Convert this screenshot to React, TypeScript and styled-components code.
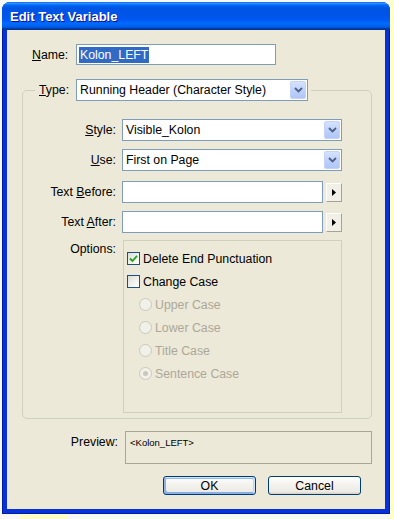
import React from 'react';
import styled, { createGlobalStyle } from 'styled-components';

const Global = createGlobalStyle`
  html, body { margin: 0; padding: 0; }
  body {
    width: 394px;
    height: 519px;
    overflow: hidden;
    background:
      linear-gradient(#ffffc6, #ffffc6) 20px 514px / 47px 5px no-repeat,
      linear-gradient(#333, #333) 37px 514px / 1px 5px no-repeat,
      linear-gradient(to right, #f7f7f5 0, #f7f7f5 390px, #ffffc6 390px);
    font-family: "Liberation Sans", Arial, sans-serif;
    font-size: 12.3px;
    color: #000;
  }
`;

const Window = styled.div`
  margin: 2px 0 0 2px;
  width: 388px;
  height: 512px;
  display: flex;
  flex-direction: column;
  border-radius: 8px 8px 0 0;
  overflow: hidden;
  background: #0831d9;
`;

const TitleBar = styled.div`
  height: 28px;
  flex: none;
  display: flex;
  align-items: center;
  padding-left: 8px;
  color: #fff;
  font-weight: bold;
  font-size: 13px;
  text-shadow: 1px 1px #0f1089;
  background: linear-gradient(
    180deg,
    #0058ee 0%,
    #3593ff 4%,
    #288eff 6%,
    #127dff 8%,
    #036ffc 10%,
    #0262ee 14%,
    #0057e5 20%,
    #0054e3 24%,
    #0055eb 56%,
    #005bf5 66%,
    #026afe 76%,
    #0062ef 86%,
    #0052d6 92%,
    #0040ab 94%,
    #003092 100%
  );
`;

const Frame = styled.div`
  flex: 1;
  display: flex;
  padding: 0 5px 5px;
  background: #0831d9;
  box-shadow: inset 1px 0 #001ea0, inset -1px 0 #001ea0, inset 0 -1px #001ea0;
`;

const Client = styled.div`
  flex: 1;
  display: flex;
  flex-direction: column;
  background: #ece9d8;
`;

const NameRow = styled.div`
  display: flex;
  align-items: center;
  margin-top: 14px;
  padding-left: 25px;
`;

const NameLabel = styled.span`
  width: 44px;
`;

const TextBox = styled.div<{ $w: number }>`
  box-sizing: border-box;
  width: ${p => p.$w}px;
  height: ${p => (p.$w === 200 ? 21 : 22)}px;
  border: 1px solid #7f9db9;
  background: #fff;
  display: flex;
  align-items: center;
  padding-left: 2px;
`;

const Selected = styled.span`
  background: #316ac5;
  color: #fff;
  padding: 1px 1px;
`;

const Group = styled.fieldset`
  margin: 14px 13px 0 15px;
  padding: 18px 0 5px 0;
  border: 1px solid #d0d0bf;
  border-radius: 5px;
  min-width: 0;
`;

const Legend = styled.legend`
  margin-left: 12px;
  padding: 0 3px 0 4px;
  display: flex;
  align-items: center;
  gap: 7px;
`;

const Combo = styled.div<{ $w: number }>`
  box-sizing: border-box;
  width: ${p => p.$w}px;
  height: 22px;
  border: 1px solid #7f9db9;
  background: #fff;
  display: flex;
  align-items: center;
`;

const ComboText = styled.span`
  flex: 1;
  padding-left: 3px;
  white-space: nowrap;
  overflow: hidden;
`;

const ComboButton = styled.span`
  box-sizing: border-box;
  width: 16px;
  height: 18px;
  margin-right: 1px;
  border: 1px solid #c3d3fd;
  border-radius: 2px;
  background: linear-gradient(180deg, #d6e2fd 0%, #bccffa 60%, #b1c6f7 100%);
  display: flex;
  align-items: center;
  justify-content: center;
`;

const FieldRow = styled.div<{ $mt: number }>`
  display: flex;
  align-items: center;
  margin-top: ${p => p.$mt}px;
  height: 22px;
`;

const RowLabel = styled.span`
  width: 93px;
  text-align: right;
  margin-right: 6px;
  white-space: nowrap;
`;

const ArrowButton = styled.span`
  box-sizing: border-box;
  width: 16px;
  height: 19px;
  margin-left: 3px;
  background: #f1efe6;
  border: 1px solid;
  border-color: #fff #a7a394 #a7a394 #fff;
  display: flex;
  align-items: center;
  justify-content: center;
`;

const OptionsRow = styled.div`
  display: flex;
  align-items: flex-start;
  margin-top: 7px;
`;

const OptionsLabel = styled(RowLabel)`
  margin-top: 2px;
  margin-right: 7px;
`;

const OptionsBox = styled.div`
  box-sizing: border-box;
  width: 219px;
  height: 173px;
  border: 1px solid #d0d0bf;
  padding: 6px 0 0 3px;
  display: flex;
  flex-direction: column;
`;

const OptionItem = styled.div<{ $indent?: boolean; $disabled?: boolean }>`
  height: 23px;
  display: flex;
  align-items: center;
  gap: 3px;
  padding-left: ${p => (p.$indent ? 12 : 0)}px;
  color: ${p => (p.$disabled ? '#aca899' : '#000')};
  white-space: nowrap;
`;

const Check = styled.span`
  box-sizing: border-box;
  width: 13px;
  height: 13px;
  border: 1px solid #1c5180;
  background: linear-gradient(135deg, #dcdcd7 0%, #f2f2ef 60%, #fff 100%);
  display: flex;
  align-items: center;
  justify-content: center;
`;

const Radio = styled.span`
  box-sizing: border-box;
  width: 13px;
  height: 13px;
  border-radius: 50%;
  border: 1px solid #cac8bb;
  background: #f2f1e9;
  display: flex;
  align-items: center;
  justify-content: center;
`;

const RadioDot = styled.span`
  width: 5px;
  height: 5px;
  border-radius: 50%;
  background: #cac8bb;
`;

const PreviewRow = styled.div`
  display: flex;
  align-items: flex-start;
  margin-top: 12px;
`;

const PreviewLabel = styled.span`
  width: 111px;
  text-align: right;
  margin-right: 7px;
  margin-top: 4px;
`;

const PreviewBox = styled.div`
  box-sizing: border-box;
  width: 247px;
  height: 33px;
  border: 1px solid #a9a696;
  padding: 5px 4px;
  font-size: 9.5px;
`;

const ButtonRow = styled.div`
  display: flex;
  justify-content: flex-end;
  gap: 12px;
  margin-top: 12px;
  padding-right: 24px;
`;

const Button = styled.button<{ $default?: boolean }>`
  box-sizing: border-box;
  width: 93px;
  height: 19px;
  padding: 0;
  font-family: inherit;
  font-size: 12.3px;
  color: #000;
  border: 1px solid #003c74;
  border-radius: 3px;
  background: linear-gradient(180deg, #ffffff 0%, #f4f3ee 40%, #ecebe6 85%, #d6d0c5 100%);
  box-shadow: ${p =>
    p.$default
      ? 'inset -1px 1px #cee7ff, inset 1px 2px #98b8ea, inset -2px 2px #bcd4f6, inset 1px -1px #89ade4, inset 2px -2px #89ade4'
      : 'none'};
`;

const U = styled.span`
  text-decoration: underline;
  text-underline-offset: 1px;
`;

const ChevronDown = () => (
  <svg width="9" height="6" viewBox="0 0 9 6">
    <path d="M1 1 L4.5 4.5 L8 1" fill="none" stroke="#4d6185" strokeWidth="1.8" />
  </svg>
);

const TriRight = () => (
  <svg width="4" height="7" viewBox="0 0 4 7">
    <polygon points="0,0 4,3.5 0,7" fill="#000" />
  </svg>
);

const CheckMark = () => (
  <svg width="9" height="9" viewBox="0 0 9 9">
    <path d="M1 4.5 L3.5 7 L8 1.8" fill="none" stroke="#21a121" strokeWidth="1.8" />
  </svg>
);

export default function App() {
  return (
    <>
      <Global />
      <Window>
        <TitleBar>Edit Text Variable</TitleBar>
        <Frame>
          <Client>
            <NameRow>
              <NameLabel>
                <U>N</U>ame:
              </NameLabel>
              <TextBox $w={200}>
                <Selected>Kolon_LEFT</Selected>
              </TextBox>
            </NameRow>

            <Group>
              <Legend>
                <span>
                  <U>T</U>ype:
                </span>
                <Combo $w={232}>
                  <ComboText>Running Header (Character Style)</ComboText>
                  <ComboButton>
                    <ChevronDown />
                  </ComboButton>
                </Combo>
              </Legend>

              <FieldRow $mt={0}>
                <RowLabel>
                  <U>S</U>tyle:
                </RowLabel>
                <Combo $w={220}>
                  <ComboText>Visible_Kolon</ComboText>
                  <ComboButton>
                    <ChevronDown />
                  </ComboButton>
                </Combo>
              </FieldRow>

              <FieldRow $mt={8}>
                <RowLabel>
                  <U>U</U>se:
                </RowLabel>
                <Combo $w={220}>
                  <ComboText>First on Page</ComboText>
                  <ComboButton>
                    <ChevronDown />
                  </ComboButton>
                </Combo>
              </FieldRow>

              <FieldRow $mt={10}>
                <RowLabel>
                  Text <U>B</U>efore:
                </RowLabel>
                <TextBox $w={201} />
                <ArrowButton>
                  <TriRight />
                </ArrowButton>
              </FieldRow>

              <FieldRow $mt={8}>
                <RowLabel>
                  Text <U>A</U>fter:
                </RowLabel>
                <TextBox $w={201} />
                <ArrowButton>
                  <TriRight />
                </ArrowButton>
              </FieldRow>

              <OptionsRow>
                <OptionsLabel>Options:</OptionsLabel>
                <OptionsBox>
                  <OptionItem>
                    <Check>
                      <CheckMark />
                    </Check>
                    Delete End Punctuation
                  </OptionItem>
                  <OptionItem>
                    <Check />
                    Change Case
                  </OptionItem>
                  <OptionItem $indent $disabled>
                    <Radio />
                    Upper Case
                  </OptionItem>
                  <OptionItem $indent $disabled>
                    <Radio />
                    Lower Case
                  </OptionItem>
                  <OptionItem $indent $disabled>
                    <Radio />
                    Title Case
                  </OptionItem>
                  <OptionItem $indent $disabled>
                    <Radio>
                      <RadioDot />
                    </Radio>
                    Sentence Case
                  </OptionItem>
                </OptionsBox>
              </OptionsRow>
            </Group>

            <PreviewRow>
              <PreviewLabel>Preview:</PreviewLabel>
              <PreviewBox>&lt;Kolon_LEFT&gt;</PreviewBox>
            </PreviewRow>

            <ButtonRow>
              <Button $default>OK</Button>
              <Button>Cancel</Button>
            </ButtonRow>
          </Client>
        </Frame>
      </Window>
    </>
  );
}
